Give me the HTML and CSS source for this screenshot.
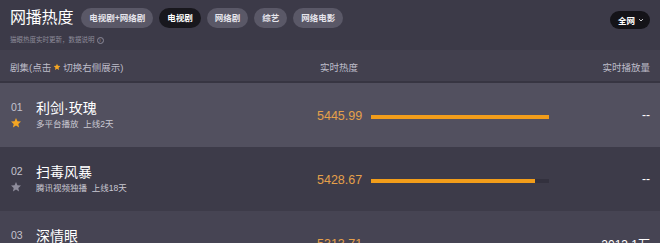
FILE: index.html
```html
<!DOCTYPE html>
<html lang="zh">
<head>
<meta charset="utf-8">
<title>网播热度</title>
<link rel="stylesheet" href="styles.css">
</head>
<body>
<div class="page">
  <header class="top">
    <div class="top-row">
      <h1 class="title">网播热度</h1>
      <nav class="tabs">
        <span class="tab">电视剧+网络剧</span>
        <span class="tab tab-active">电视剧</span>
        <span class="tab">网络剧</span>
        <span class="tab">综艺</span>
        <span class="tab">网络电影</span>
      </nav>
      <span class="scope">全网<svg class="chev" viewBox="0 0 8 8" width="6" height="6"><path d="M1.5 2.8 L4 5.3 L6.5 2.8" fill="none" stroke="#fff" stroke-width="1.1"/></svg></span>
    </div>
    <p class="note">猫眼热度实时更新，数据说明<span class="info">i</span></p>
  </header>

  <div class="col-head">
    <span class="ch-name">剧集(点击 <svg class="star-s" viewBox="0 0 24 24" width="8" height="8"><path d="M12 2l2.9 6.6 7.1.6-5.4 4.7 1.6 7-6.2-3.7-6.2 3.7 1.6-7L2 9.2l7.1-.6z" fill="#f5a623"/></svg> 切换右侧展示)</span>
    <span class="ch-heat">实时热度</span>
    <span class="ch-play">实时播放量</span>
  </div>

  <ul class="list">
    <li class="row row-hl">
      <div class="rank"><span class="num">01</span><svg class="star" viewBox="0 0 24 24" width="12" height="12"><path d="M12 2l2.9 6.6 7.1.6-5.4 4.7 1.6 7-6.2-3.7-6.2 3.7 1.6-7L2 9.2l7.1-.6z" fill="#f5a623"/></svg></div>
      <div class="info-col"><div class="name">利剑·玫瑰</div><div class="sub">多平台播放&nbsp;&nbsp;上线2天</div></div>
      <div class="heat"><span class="hval">5445.99</span><span class="track"><span class="bar" style="width:100%"></span></span></div>
      <div class="play">--</div>
    </li>
    <li class="row row-dark">
      <div class="rank"><span class="num">02</span><svg class="star" viewBox="0 0 24 24" width="12" height="12"><path d="M12 2l2.9 6.6 7.1.6-5.4 4.7 1.6 7-6.2-3.7-6.2 3.7 1.6-7L2 9.2l7.1-.6z" fill="#8e8c9b"/></svg></div>
      <div class="info-col"><div class="name">扫毒风暴</div><div class="sub">腾讯视频独播&nbsp;&nbsp;上线18天</div></div>
      <div class="heat"><span class="hval">5428.67</span><span class="track"><span class="bar" style="width:92%"></span></span></div>
      <div class="play">--</div>
    </li>
    <li class="row row-mid">
      <div class="rank"><span class="num">03</span><svg class="star" viewBox="0 0 24 24" width="12" height="12"><path d="M12 2l2.9 6.6 7.1.6-5.4 4.7 1.6 7-6.2-3.7-6.2 3.7 1.6-7L2 9.2l7.1-.6z" fill="#8e8c9b"/></svg></div>
      <div class="info-col"><div class="name">深情眼</div><div class="sub">多平台播放&nbsp;&nbsp;上线10天</div></div>
      <div class="heat"><span class="hval">5313.71</span><span class="track"><span class="bar" style="width:83%"></span></span></div>
      <div class="play">2013.1万</div>
    </li>
  </ul>
</div>
</body>
</html>
```

FILE: styles.css
```css
* { box-sizing: border-box; }
html, body { margin: 0; padding: 0; }
body {
  background: #3c3a48;
  font-family: "Liberation Sans", "Noto Sans CJK SC", sans-serif;
  color: #fff;
  width: 660px;
  height: 243px;
  overflow: hidden;
}
.page { width: 660px; }

.top { height: 50px; padding: 8px 10px 0 10px; background: #3c3a48; }
.top-row { display: flex; align-items: center; height: 20px; }
.title { margin: 0; font-size: 16px; font-weight: 400; line-height: 20px; color: #fff; letter-spacing: -0.2px; }
.tabs { display: flex; gap: 6px; margin-left: 8px; }
.tab {
  height: 20px; line-height: 20px; padding: 0 8px; border-radius: 10px;
  background: #5a5867; color: #e6e5ec; font-size: 8.5px; font-weight: 700;
}
.tab-active { background: #18171d; color: #fff; }
.scope {
  margin-left: auto; margin-top: 4px; height: 18px; padding: 0 6px 0 8px; border-radius: 9px;
  background: #141318; color: #fff; font-size: 8.5px; font-weight: 700;
  display: flex; align-items: center; gap: 3px;
}
.chev { display: block; }
.note { margin: 7px 0 0 0; font-size: 6.5px; line-height: 10px; color: #8c8a99; display: flex; align-items: center; }
.info {
  display: inline-flex; align-items: center; justify-content: center;
  width: 7px; height: 7px; margin-left: 2px; border: 0.7px solid #8c8a99; border-radius: 50%;
  font-size: 5px;
}

.col-head {
  height: 33px; padding: 4px 10px 2px 10px; display: flex; align-items: center;
  background: #42404e; font-size: 9.5px; color: #bebdca;
  border-bottom: 2px solid #373542;
}
.ch-name { display: flex; align-items: center; gap: 2px; width: 310px; }
.star-s { display: block; }
.ch-heat { width: 200px; }
.ch-play { margin-left: auto; }

.list { list-style: none; margin: 0; padding: 0; }
.row { height: 64px; display: flex; align-items: center; padding: 0 10px; }
.row-hl { background: #52505f; }
.row-dark { background: #3d3b49; }
.row-mid { background: #464453; }
.rank { width: 26px; display: flex; flex-direction: column; align-items: flex-start; gap: 4px; margin-top: -1px; }
.num { font-size: 10.5px; color: #c4c3ce; line-height: 12px; padding-left: 1px; }
.star { display: block; }
.info-col { width: 281px; display: flex; flex-direction: column; }
.name { font-size: 14px; line-height: 18px; color: #fff; }
.sub { font-size: 8.5px; line-height: 14px; color: #cac9d3; }
.heat { display: flex; align-items: center; width: 240px; margin-top: 1px; }
.hval { width: 54px; font-size: 12.5px; color: #e5a04a; }
.track { width: 178px; height: 4px; background: #33313e; display: block; margin-top: 2px; }
.bar { display: block; height: 4px; background: #f29d1a; }
.play { margin-left: auto; font-size: 12px; color: #fff; }
```
